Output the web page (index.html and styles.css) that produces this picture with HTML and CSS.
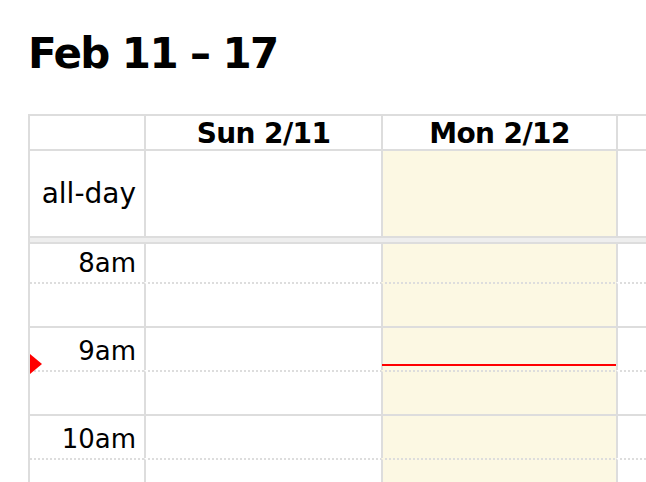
FILE: index.html
```html
<!DOCTYPE html>
<html lang="en">
<head>
<meta charset="utf-8">
<title>Feb 11 – 17</title>
<link rel="stylesheet" href="styles.css">
</head>
<body>
<div class="page">
  <h2 class="title">Feb 11 – 17</h2>
  <div class="cal">
    <div class="row head">
      <div class="cell axis"></div>
      <div class="cell day">Sun 2/11</div>
      <div class="cell day">Mon 2/12</div>
      <div class="cell day"></div>
    </div>
    <div class="row allday">
      <div class="cell axis"><span>all-day</span></div>
      <div class="cell day"></div>
      <div class="cell day today"></div>
      <div class="cell day"></div>
    </div>
    <div class="divider"></div>
    <div class="scroller">
      <div class="slats">
        <div class="row slot hour">
          <div class="cell axis">8am</div>
          <div class="cell day"></div><div class="cell day today"></div><div class="cell day"></div>
        </div>
        <div class="row slot half">
          <div class="cell axis"></div>
          <div class="cell day"></div><div class="cell day today"></div><div class="cell day"></div>
        </div>
        <div class="row slot hour">
          <div class="cell axis now-axis">9am<span class="now-arrow"></span></div>
          <div class="cell day"></div><div class="cell day today now-cell"><span class="now-line"></span></div><div class="cell day"></div>
        </div>
        <div class="row slot half">
          <div class="cell axis"></div>
          <div class="cell day"></div><div class="cell day today"></div><div class="cell day"></div>
        </div>
        <div class="row slot hour">
          <div class="cell axis">10am</div>
          <div class="cell day"></div><div class="cell day today"></div><div class="cell day"></div>
        </div>
        <div class="row slot half">
          <div class="cell axis"></div>
          <div class="cell day"></div><div class="cell day today"></div><div class="cell day"></div>
        </div>
      </div>
    </div>
  </div>
</div>
</body>
</html>
```

FILE: styles.css
```css
html, body {
  margin: 0;
  padding: 0;
  overflow: hidden;
  background: #fff;
  width: 646px;
  height: 482px;
}
body {
  font-family: "DejaVu Sans", "Liberation Sans", sans-serif;
  color: #000;
}
.page {
  padding-left: 28px;
}
.title {
  margin: 30px 0 0 0;
  font-size: 42px;
  line-height: 48px;
  font-weight: bold;
  letter-spacing: -1.6px;
}
.cal {
  margin-top: 36px;
  border-left: 2px solid #ddd;
  border-top: 2px solid #ddd;
  overflow: hidden;
}
.row {
  display: grid;
  grid-template-columns: 114px 237px 235px 235px;
}
.cell {
  box-sizing: border-box;
}
.cell.day {
  border-left: 2px solid #ddd;
}
.head {
  border-bottom: 2px solid #ddd;
}
.head .cell {
  height: 33px;
  padding-top: 3px;
  line-height: 30px;
  font-size: 28px;
  font-weight: bold;
  text-align: center;
  letter-spacing: -0.6px;
}
.allday .cell {
  height: 85px;
}
.allday .axis {
  display: flex;
  align-items: center;
  justify-content: flex-end;
  padding-right: 8px;
  font-size: 28px;
}
.today {
  background-color: #fcf8e3;
}
.divider {
  height: 4px;
  background: #eee;
  border-top: 2px solid #ddd;
  border-bottom: 2px solid #ddd;
}
.scroller {
  height: 240px;
  overflow: hidden;
}
.slats {
  margin-top: -6px;
}
.slot .cell {
  height: 44px;
}
.slot.hour .cell {
  border-top: 2px solid #ddd;
}
.slot.half .cell {
  border-top: 2px solid transparent;
  background-image: linear-gradient(90deg, #ddd 2px, transparent 2px);
  background-size: 4px 2px;
  background-repeat: repeat-x;
  background-origin: border-box;
  background-position: 0 0;
}
.slot .axis {
  text-align: right;
  padding: 7px 8px 0 0;
  font-size: 26px;
  line-height: 32px;
}
.now-axis, .now-cell {
  position: relative;
}
.now-arrow {
  position: absolute;
  left: 0;
  top: 26px;
  width: 0;
  height: 0;
  border-left: 12px solid #f00;
  border-top: 10px solid transparent;
  border-bottom: 10px solid transparent;
}
.now-line {
  position: absolute;
  left: -1px;
  right: 0;
  top: 36px;
  height: 2px;
  background: #f00;
}
```
